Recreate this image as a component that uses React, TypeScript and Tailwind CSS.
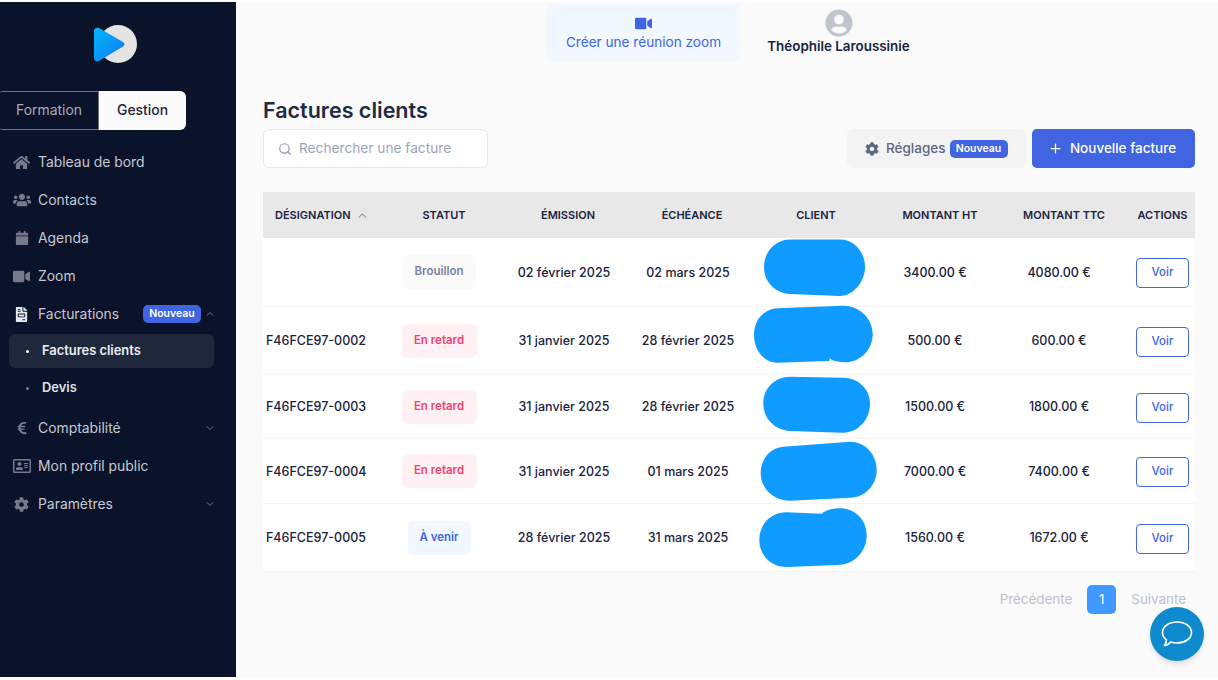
import type { ReactNode } from "react";
import { ChevronDown, ChevronUp, Plus, Search } from "lucide-react";
import { FaCalendar, FaCog, FaEuroSign, FaFileInvoice, FaHome, FaRegAddressCard, FaUserCircle, FaUsers, FaVideo } from "react-icons/fa";

type Row = {
  ref: string;
  status: "draft" | "late" | "soon";
  issued: string;
  due: string;
  ht: string;
  ttc: string;
  height: string;
  blob: string;
};

const rows: Row[] = [
  {
    ref: "",
    status: "draft",
    issued: "02 février 2025",
    due: "02 mars 2025",
    ht: "3400.00 €",
    ttc: "4080.00 €",
    height: "h-[69px]",
    blob: "M40 1.5 L90 1.5 C105 1.5 115 15 115 29 C115 45 102 58 90 58 L40 56 C25 55 14 44 14 29 C14 14 25 1.5 40 1.5 Z",
  },
  {
    ref: "F46FCE97-0002",
    status: "late",
    issued: "31 janvier 2025",
    due: "28 février 2025",
    ht: "500.00 €",
    ttc: "600.00 €",
    height: "h-[68px]",
    blob: "M27 1.3 L93 -1.3 C110 -1.3 122.7 12 122.7 27 C122.7 43 110 55.3 95 55.3 C88 55.3 83 54 80 51.5 L79 54 L27 55.7 C14 55.7 4 43 4 28 C4 13 14 2 27 1.3 Z",
  },
  {
    ref: "F46FCE97-0003",
    status: "late",
    issued: "31 janvier 2025",
    due: "28 février 2025",
    ht: "1500.00 €",
    ttc: "1800.00 €",
    height: "h-[64px]",
    blob: "M40 1.7 L93 2.7 C108 2.7 120 14 120 28.3 C120 45 108 57.7 93 57.7 L40 56 C25 55 13.3 44 13.3 28.3 C13.3 13 25 1.7 40 1.7 Z",
  },
  {
    ref: "F46FCE97-0004",
    status: "late",
    issued: "31 janvier 2025",
    due: "01 mars 2025",
    ht: "7000.00 €",
    ttc: "7400.00 €",
    height: "h-[65px]",
    blob: "M33 7.7 L100 2.7 C115 2.7 126.7 15 126.7 31 C126.7 46 115 58.7 100 58.7 L40 61.7 C24 62 10.7 50 10.7 34.3 C10.7 20 20 9 33 7.7 Z",
  },
  {
    ref: "F46FCE97-0005",
    status: "soon",
    issued: "28 février 2025",
    due: "31 mars 2025",
    ht: "1560.00 €",
    ttc: "1672.00 €",
    height: "h-[68px]",
    blob: "M36.7 8.3 L71.7 9.7 C76 6 83 4.3 90 4.3 C105 4.3 116.7 16 116.7 31 C116.7 48 104 61 86.7 61 L36.7 63 C21 63 9.3 51 9.3 36 C9.3 20 21 8.3 36.7 8.3 Z",
  },
];

const statusStyles = {
  draft: { label: "Brouillon", className: "w-[73px] bg-[#fafafa] text-[#7a819f]" },
  late: { label: "En retard", className: "w-[75px] bg-[#fff0f4] text-[#f5426c]" },
  soon: { label: "À venir", className: "w-[63px] bg-[#f1f8ff] text-[#4164e0]" },
};

function NewBadge() {
  return (
    <span className="flex h-[18px] w-[58px] items-center justify-center rounded-[5px] bg-[#4164e0] text-[10.5px] font-semibold text-white">
      Nouveau
    </span>
  );
}

function NavItem({ icon, label, children }: { icon: ReactNode; label: string; children?: ReactNode }) {
  return (
    <div className="flex h-[38px] items-center pl-[12px] pr-[20px] text-[13.9px] text-[#c6c8d0]">
      <span className="flex w-[19px] justify-center text-[#777a8a]">{icon}</span>
      <span className="ml-[7px] flex-1">{label}</span>
      {children}
    </div>
  );
}

function Sidebar() {
  return (
    <aside className="flex w-[236px] shrink-0 flex-col bg-[#0a132a] pt-[22px]">
      <svg className="ml-[92px] h-[42px] w-[48px]" viewBox="0 0 48 42">
        <defs>
          <linearGradient id="logoBlue" x1="0" y1="0" x2="1" y2="1">
            <stop offset="0" stopColor="#00b8ff" />
            <stop offset="1" stopColor="#1576f0" />
          </linearGradient>
        </defs>
        <circle cx="26" cy="20" r="19" fill="#e4e4e4" />
        <path d="M2 7 C2 4 5 3 7 4 L31 18 C33 19.5 33 21.5 31 22.5 L7 37 C5 38 2 37 2 34 Z" fill="url(#logoBlue)" />
      </svg>
      <div className="mt-[25px] flex h-[39px] w-[186px] text-[13.9px]">
        <div className="flex w-[99px] items-center justify-center rounded-l-[2px] border border-l-0 border-[#6f7382] text-[#a9acb8]">
          Formation
        </div>
        <div className="flex flex-1 items-center justify-center rounded-r-[6px] bg-[#fafafa] font-medium text-[#1c2440]">
          Gestion
        </div>
      </div>
      <nav className="mt-[13px]">
        <NavItem icon={<FaHome size={17} />} label="Tableau de bord" />
        <NavItem icon={<FaUsers size={18} />} label="Contacts" />
        <NavItem icon={<FaCalendar size={14} />} label="Agenda" />
        <NavItem icon={<FaVideo size={17} />} label="Zoom" />
        <NavItem icon={<FaFileInvoice size={15} className="text-[#e8e9ee]" />} label="Facturations">
          <NewBadge />
          <ChevronUp size={12} className="ml-[3px] text-[#6f7382]" />
        </NavItem>
        <div className="ml-[9px] mt-[1px] flex h-[34px] w-[205px] items-center rounded-[6px] bg-[#1f273b] pl-[17px] text-[12.9px] font-semibold text-[#eceef2]">
          <span className="h-[3px] w-[3px] rounded-full bg-white" />
          <span className="ml-[13px]">Factures clients</span>
        </div>
        <div className="ml-[9px] mt-[3px] flex h-[34px] w-[205px] items-center pl-[17px] text-[12.9px] font-semibold text-[#dfe1e7]">
          <span className="h-[3px] w-[3px] rounded-full bg-[#777a8a]" />
          <span className="ml-[13px]">Devis</span>
        </div>
        <div className="mt-[4px]">
          <NavItem icon={<FaEuroSign size={14} />} label="Comptabilité">
            <ChevronDown size={12} className="text-[#6f7382]" />
          </NavItem>
        </div>
        <NavItem icon={<FaRegAddressCard size={18} />} label="Mon profil public" />
        <NavItem icon={<FaCog size={15} />} label="Paramètres">
          <ChevronDown size={12} className="text-[#6f7382]" />
        </NavItem>
      </nav>
    </aside>
  );
}

function InvoiceRow({ row }: { row: Row }) {
  const status = statusStyles[row.status];
  return (
    <div className={`grid ${row.height} grid-cols-[115px_124px_124px_124px_124px_124px_124px_73px] items-center border-b border-[#f4f4f4] bg-white pt-[2px] text-center text-[12.5px] font-medium text-[#1a2340]`}>
      <div className="pl-[3px] text-left">{row.ref}</div>
      <div className="flex justify-center pb-[2px] pr-[2px]">
        <span className={`flex h-[34px] items-center justify-center rounded-[6px] text-[11.5px] font-semibold ${status.className}`}>
          {status.label}
        </span>
      </div>
      <div>{row.issued}</div>
      <div>{row.due}</div>
      <div className="relative h-full">
        <svg className="absolute left-0 top-[-2px] h-full w-full overflow-visible">
          <path d={row.blob} fill="#0f9bff" />
        </svg>
      </div>
      <div className="pr-[2px]">{row.ht}</div>
      <div className="pr-[2px]">{row.ttc}</div>
      <div className="flex justify-end pr-[6px]">
        <button className="h-[30px] w-[53px] rounded-[4px] border border-[#4164e0] bg-white text-[11.5px] font-medium text-[#4164e0]">
          Voir
        </button>
      </div>
    </div>
  );
}

export default function App() {
  return (
    <div className="relative flex h-[680px] w-[1218px] overflow-hidden bg-white pb-[3px] pt-[2px] font-['Inter',sans-serif]">
      <Sidebar />
      <main className="flex-1 bg-[#fafafa] pl-[27px] pr-[23px] pt-[1px]">
        <header className="ml-[284px] flex h-[59px] items-start">
          <button className="flex h-[59px] w-[193px] flex-col items-center justify-center rounded-[6px] bg-[#f1f8ff] pt-[2px] text-[13.6px] text-[#4164e0]">
            <FaVideo size={17} />
            Créer une réunion zoom
          </button>
          <div className="ml-[27px] flex w-[143px] flex-col items-center pt-[6px]">
            <FaUserCircle size={28} className="text-[#c0c4cc]" />
            <span className="-mt-[1px] whitespace-nowrap text-[13.4px] font-semibold text-[#1a2340]">Théophile Laroussinie</span>
          </div>
        </header>

        <h1 className="mt-[35px] h-[28px] text-[21.5px] font-semibold leading-[26px] text-[#1f2a44]">Factures clients</h1>

        <div className="mt-[4px] flex h-[39px] items-stretch">
          <div className="flex w-[225px] items-center rounded-[6px] border border-[#e6e8f0] bg-white pl-[14px] text-[13.7px] text-[#9ca3b8]">
            <Search size={14} className="text-[#8f96ad]" />
            <span className="ml-[7px]">Rechercher une facture</span>
          </div>
          <div className="ml-auto flex w-[179px] items-center rounded-[6px] bg-[#f3f3f3] pl-[18px] text-[13.5px] font-medium text-[#5f6783]">
            <FaCog size={14} />
            <span className="ml-[7px] mr-[4px]">Réglages</span>
            <NewBadge />
          </div>
          <button className="ml-[6px] flex w-[163px] items-center justify-center gap-[7px] rounded-[5px] bg-[#4164e0] pr-[3px] text-[13.5px] font-medium text-white">
            <Plus size={15} />
            Nouvelle facture
          </button>
        </div>

        <div className="mt-[24px] grid h-[46px] grid-cols-[119px_124px_124px_124px_124px_124px_124px_69px] items-center bg-[#e8e8e8] text-center text-[11px] font-semibold text-[#1a2340]">
          <div className="flex items-center gap-[5px] pl-[12px]">
            DÉSIGNATION
            <ChevronUp size={13} className="text-[#8f96ad]" />
          </div>
          <div>STATUT</div>
          <div>ÉMISSION</div>
          <div>ÉCHÉANCE</div>
          <div>CLIENT</div>
          <div>MONTANT HT</div>
          <div>MONTANT TTC</div>
          <div className="pl-[4px]">ACTIONS</div>
        </div>
        {rows.map((row) => (
          <InvoiceRow key={row.blob} row={row} />
        ))}

        <div className="mt-[13px] flex h-[29px] items-center justify-end pr-[9px] text-[13.4px] text-[#c0c0cc]">
          <span>Précédente</span>
          <span className="ml-[15px] flex h-[29px] w-[29px] items-center justify-center rounded-[5px] bg-[#3f99ff] text-white">1</span>
          <span className="ml-[15px]">Suivante</span>
        </div>
      </main>

      <button className="absolute left-[1150px] top-[607px] flex h-[54px] w-[54px] items-center justify-center rounded-full bg-[#0f8bcd] shadow-md">
        <svg width="32" height="28" viewBox="0 0 32 28" fill="none" stroke="white" strokeWidth="1.6">
          <path d="M16 2 C24 2 30.5 6.5 30.5 12.5 C30.5 18.5 24 23 16 23 C13.5 23 11.5 22.6 9.5 22 C8 24 5.5 25.5 3.5 25.5 C4.8 24 5.6 22 5.4 19.8 C3 18 1.5 15.5 1.5 12.5 C1.5 6.5 8 2 16 2 Z" strokeLinejoin="round" />
        </svg>
      </button>
    </div>
  );
}
